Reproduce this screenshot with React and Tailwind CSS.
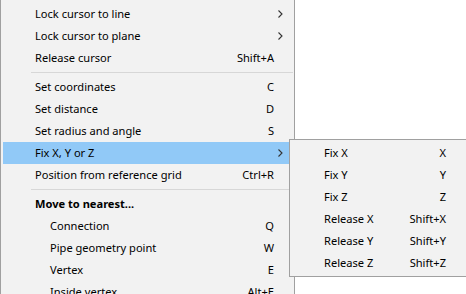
import React from 'react';

const MAIN_ITEMS = [
  { label: 'Lock cursor to line', sub: true },
  { label: 'Lock cursor to plane', sub: true },
  { label: 'Release cursor', key: 'Shift+A' },
  { sep: true },
  { label: 'Set coordinates', key: 'C' },
  { label: 'Set distance', key: 'D' },
  { label: 'Set radius and angle', key: 'S' },
  { label: 'Fix X, Y or Z', sub: true, active: true },
  { label: 'Position from reference grid', key: 'Ctrl+R' },
  { sep: true },
  { label: 'Move to nearest...', bold: true },
  { label: 'Connection', key: 'Q', indent: true },
  { label: 'Pipe geometry point', key: 'W', indent: true },
  { label: 'Vertex', key: 'E', indent: true },
  { label: 'Inside vertex', key: 'Alt+E', indent: true },
];

const FIX_ITEMS = [
  { label: 'Fix X', key: 'X' },
  { label: 'Fix Y', key: 'Y' },
  { label: 'Fix Z', key: 'Z' },
  { label: 'Release X', key: 'Shift+X' },
  { label: 'Release Y', key: 'Shift+Y' },
  { label: 'Release Z', key: 'Shift+Z' },
];

const Chevron = () => (
  <svg width="5" height="8" viewBox="0 0 5 8" className="absolute right-[9px] top-[7px]">
    <polyline points="0.5,0.5 4,4 0.5,7.5" fill="none" stroke="#333" strokeWidth="1.1" />
  </svg>
);

const MenuRow = ({ item }) => {
  if (item.sep) {
    return (
      <div className="h-[7px] flex items-center pl-[30px] pr-[1px]">
        <div className="h-px w-full bg-[#d7d7d7]" />
      </div>
    );
  }
  return (
    <div
      className={`relative mx-[2px] h-[22px] flex items-center pr-[18px] ${item.indent ? 'pl-[47px]' : 'pl-[32px]'} ${item.active ? 'bg-[#91c9f7]' : ''}`}
    >
      <span className={`flex-1 whitespace-nowrap ${item.bold ? 'font-bold' : ''}`}>{item.label}</span>
      {item.key && <span className="whitespace-nowrap">{item.key}</span>}
      {item.sub && <Chevron />}
    </div>
  );
};

export default function App() {
  return (
    <div
      className="relative w-[466px] h-[294px] bg-white overflow-hidden text-[11.1px] text-black leading-none"
      style={{ fontFamily: '"Noto Sans", "Open Sans", sans-serif' }}
    >
      <div className="w-[295px] h-full bg-[#f2f2f2] border-l border-r border-[#a0a0a0] pt-[3px]">
        {MAIN_ITEMS.map((item, i) => (
          <MenuRow key={i} item={item} />
        ))}
      </div>

      {/* Fix X, Y or Z submenu */}
      <div className="absolute left-[289px] top-[139px] w-[190px] bg-[#f2f2f2] border border-[#a0a0a0] pt-[2px] pb-[2px]">
        {FIX_ITEMS.map((item) => (
          <div key={item.label} className="mx-[2px] h-[22px] flex items-center pl-[32px] pr-[30px]">
            <span className="flex-1 whitespace-nowrap">{item.label}</span>
            <span className="whitespace-nowrap">{item.key}</span>
          </div>
        ))}
      </div>
    </div>
  );
}
